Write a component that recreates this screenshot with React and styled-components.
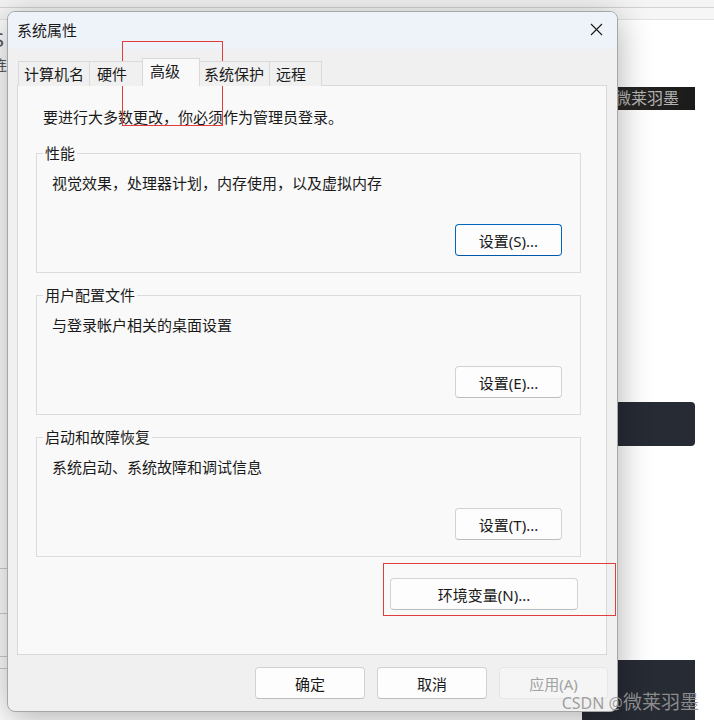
import React from 'react';
import styled, { createGlobalStyle } from 'styled-components';

const GlobalStyle = createGlobalStyle`
  html, body {
    margin: 0;
    padding: 0;
    background: #ffffff;
  }
  body {
    font-family: "Noto Sans", "Noto Sans CJK SC", sans-serif;
    color: #1a1a1a;
  }
`;

const Desktop = styled.div`
  position: relative;
  width: 714px;
  height: 720px;
  overflow: hidden;
  background: #ffffff;
  display: flex;
  flex-direction: column;
`;

const TopBar = styled.div`
  flex-shrink: 0;
  height: 7px;
  background: #f4f4f4;
  border-bottom: 1px solid #d2d2d2;
`;

const SubBar = styled.div`
  flex-shrink: 0;
  height: 11px;
  background: #f6f6f6;
  border-bottom: 1px solid #e2e2e2;
`;

const Main = styled.div`
  flex: 1;
  min-height: 0;
  overflow: hidden;
  display: flex;
  justify-content: space-between;
`;

const LeftRail = styled.div`
  width: 30px;
  display: flex;
  flex-direction: column;
  color: #555;
`;

const RailGlyph = styled.div`
  font-size: ${(p) => p.$size}px;
  line-height: 1;
  margin-top: ${(p) => p.$top}px;
  margin-left: ${(p) => p.$left}px;
`;

const RailLine = styled.div`
  flex-shrink: 0;
  height: 1px;
  background: #cfcfcf;
  margin-top: ${(p) => p.$top}px;
`;

const RightCol = styled.div`
  width: 200px;
  margin-right: 19px;
  display: flex;
  flex-direction: column;
`;

const Banner = styled.div`
  flex-shrink: 0;
  margin-top: 67px;
  height: 23px;
  background: linear-gradient(90deg, #1c1c1c, #2a2826 60%, #1a1a1a);
  color: #b3b3b3;
  font-size: 16px;
  line-height: 23px;
  text-align: right;
  padding-right: 16px;
`;

const DarkBlock = styled.div`
  flex-shrink: 0;
  margin-top: ${(p) => p.$top}px;
  height: ${(p) => p.$h}px;
  width: ${(p) => p.$w}px;
  align-self: flex-end;
  background: #272b34;
  border-radius: ${(p) => p.$radius};
`;

const Dialog = styled.div`
  position: absolute;
  left: 7px;
  top: 11px;
  width: 611px;
  height: 701px;
  box-sizing: border-box;
  border: 1px solid #a6a6a6;
  border-radius: 8px;
  background: #f0f0f0;
  box-shadow: 0 6px 34px rgba(0, 0, 0, 0.32);
  display: flex;
  flex-direction: column;
  overflow: hidden;
`;

const TitleBar = styled.div`
  height: 37px;
  box-sizing: border-box;
  background: #eef3fa;
  display: flex;
  align-items: center;
  justify-content: space-between;
  padding: 0 14px 3px 9px;
  font-size: 15px;
  color: #1a1a1a;
`;

const Body = styled.div`
  flex: 1;
  display: flex;
  flex-direction: column;
  padding: 10px 10px 0 9px;
`;

const TabRow = styled.div`
  display: flex;
  align-items: flex-end;
  height: 27px;
  padding-left: 1px;
  position: relative;
  z-index: 1;
  margin-bottom: -1px;
`;

const Tab = styled.div`
  box-sizing: border-box;
  width: ${(p) => p.$w}px;
  height: ${(p) => (p.$active ? 28 : 25)}px;
  margin-right: -1px;
  padding-left: ${(p) => p.$pl}px;
  border: 1px solid #d9d9d9;
  border-bottom: none;
  background: ${(p) => (p.$active ? '#f9f9f9' : '#f0f0f0')};
  font-size: 15px;
  line-height: 24px;
  white-space: nowrap;
  color: #1a1a1a;
`;

const Panel = styled.div`
  box-sizing: border-box;
  height: 570px;
  border: 1px solid #d9d9d9;
  background: #f9f9f9;
  display: flex;
  flex-direction: column;
  padding: 21px 25px 0 18px;
`;

const Intro = styled.div`
  font-size: 15px;
  line-height: 20px;
  margin-left: 7px;
  margin-bottom: 26px;
`;

const GroupBox = styled.div`
  border: 1px solid #dcdcdc;
  display: flex;
  flex-direction: column;
  padding: 0 18px 16px 15px;
  margin-bottom: 22px;
`;

const Legend = styled.div`
  align-self: flex-start;
  margin: -10px 0 0 -9px;
  padding: 0 2px;
  background: #f9f9f9;
  font-size: 15px;
  line-height: 18px;
`;

const Desc = styled.div`
  margin-top: 11px;
  font-size: 15px;
  line-height: 20px;
`;

const Button = styled.button`
  box-sizing: border-box;
  width: ${(p) => p.$w || 107}px;
  height: 32px;
  border: 1px solid ${(p) => (p.$focus ? '#0067c0' : p.$disabled ? '#e6e6e6' : '#d2d2d2')};
  border-bottom-color: ${(p) => (p.$focus ? '#0058a8' : p.$disabled ? '#e6e6e6' : '#bdbdbd')};
  border-radius: 4px;
  background: ${(p) => (p.$disabled ? '#f5f5f5' : '#fdfdfd')};
  color: ${(p) => (p.$disabled ? '#a2a2a2' : '#1a1a1a')};
  font-family: "Noto Sans", "Noto Sans CJK SC", sans-serif;
  font-size: 15px;
  padding: 0;
  cursor: default;
`;

const GroupButton = styled(Button)`
  align-self: flex-end;
  margin-top: 31px;
`;

const EnvButton = styled(Button)`
  align-self: flex-end;
  margin: -1px 3px 0 0;
`;

const Footer = styled.div`
  display: flex;
  justify-content: flex-end;
  gap: 12px;
  margin: 12px -1px 0 0;
`;

const Annotation = styled.div`
  position: absolute;
  left: ${(p) => p.$x}px;
  top: ${(p) => p.$y}px;
  width: ${(p) => p.$w}px;
  height: ${(p) => p.$h}px;
  box-sizing: border-box;
  border: 1px solid #e23c3c;
  pointer-events: none;
`;

const Watermark = styled.div`
  position: absolute;
  right: 15px;
  bottom: 6px;
  color: rgba(150, 150, 150, 0.92);
  font-size: 16px;
  line-height: 22px;
  white-space: nowrap;
`;

const WatermarkName = styled.span`
  font-size: 19px;
`;

function CloseIcon() {
  return (
    <svg width="13" height="13" viewBox="0 0 13 13">
      <path d="M1 1 L12 12 M12 1 L1 12" stroke="#1a1a1a" strokeWidth="1.1" fill="none" />
    </svg>
  );
}

const tabs = [
  { label: '计算机名', w: 72, pl: 5 },
  { label: '硬件', w: 54, pl: 7 },
  { label: '高级', w: 58, pl: 7, active: true },
  { label: '系统保护', w: 71, pl: 4 },
  { label: '远程', w: 53, pl: 6 },
];

const groups = [
  { title: '性能', desc: '视觉效果，处理器计划，内存使用，以及虚拟内存', btn: '设置(S)...', focus: true },
  { title: '用户配置文件', desc: '与登录帐户相关的桌面设置', btn: '设置(E)...' },
  { title: '启动和故障恢复', desc: '系统启动、系统故障和调试信息', btn: '设置(T)...' },
];

export default function App() {
  return (
    <>
      <GlobalStyle />
      <Desktop>
        <TopBar />
        <SubBar />
        <Main>
          <LeftRail>
            <RailGlyph $size={20} $top={10} $left={-7}>S</RailGlyph>
            <RailGlyph $size={14} $top={8} $left={-7}>连</RailGlyph>
            <RailLine $top={496} />
            <RailLine $top={44} />
            <RailLine $top={42} />
            <RailLine $top={11} />
          </LeftRail>
          <RightCol>
            <Banner>微莱羽墨</Banner>
            <DarkBlock $top={292} $h={44} $w={200} $radius="0 4px 4px 0" />
            <DarkBlock $top={214} $h={60} $w={113} $radius="6px 0 0 0" />
          </RightCol>
        </Main>

        <Dialog>
          <TitleBar>
            <span>系统属性</span>
            <CloseIcon />
          </TitleBar>
          <Body>
            <TabRow>
              {tabs.map((t) => (
                <Tab key={t.label} $w={t.w} $pl={t.pl} $active={t.active}>
                  {t.label}
                </Tab>
              ))}
            </TabRow>
            <Panel>
              <Intro>要进行大多数更改，你必须作为管理员登录。</Intro>
              {groups.map((g) => (
                <GroupBox key={g.title}>
                  <Legend>{g.title}</Legend>
                  <Desc>{g.desc}</Desc>
                  <GroupButton $focus={g.focus}>{g.btn}</GroupButton>
                </GroupBox>
              ))}
              <EnvButton $w={188}>环境变量(N)...</EnvButton>
            </Panel>
            <Footer>
              <Button $w={110}>确定</Button>
              <Button $w={110}>取消</Button>
              <Button $w={109} $disabled>应用(A)</Button>
            </Footer>
          </Body>
        </Dialog>

        <Annotation $x={122} $y={41} $w={101} $h={85} />
        <Annotation $x={383} $y={563} $w={233} $h={53} />
        <Watermark>
          CSDN @<WatermarkName>微莱羽墨</WatermarkName>
        </Watermark>
      </Desktop>
    </>
  );
}
